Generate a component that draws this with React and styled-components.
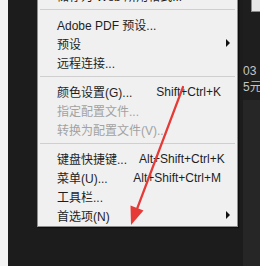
import React from 'react';
import styled, { createGlobalStyle } from 'styled-components';

const GlobalStyle = createGlobalStyle`
  html, body {
    margin: 0;
    padding: 0;
    background: #1c1c1c;
  }
`;

const items = [
  { type: 'item', label: '储存为 Web 所用格式...' },
  { type: 'sep' },
  { type: 'item', label: 'Adobe PDF 预设...' },
  { type: 'item', label: '预设', sub: true },
  { type: 'item', label: '远程连接...' },
  { type: 'sep' },
  { type: 'item', label: '颜色设置(G)...', shortcut: 'Shift+Ctrl+K' },
  { type: 'item', label: '指定配置文件...', disabled: true },
  { type: 'item', label: '转换为配置文件(V)...', disabled: true },
  { type: 'sep' },
  { type: 'item', label: '键盘快捷键...', shortcut: 'Alt+Shift+Ctrl+K' },
  { type: 'item', label: '菜单(U)...', shortcut: 'Alt+Shift+Ctrl+M' },
  { type: 'item', label: '工具栏...' },
  { type: 'item', label: '首选项(N)', sub: true },
];

function App() {
  return (
    <>
      <GlobalStyle />
      <Page>
        <LeftStrip />
        <Canvas>
          <Menu>
            {items.map((it, i) =>
              it.type === 'sep' ? (
                <Separator key={i} />
              ) : (
                <Item key={i} $disabled={it.disabled}>
                  <Label>{it.label}</Label>
                  {it.shortcut && <Shortcut>{it.shortcut}</Shortcut>}
                  {it.sub && <SubArrow />}
                </Item>
              )
            )}
          </Menu>
        </Canvas>
        <RightPanel>
          <PanelTop>
            <TopBox />
            <PanelText>03</PanelText>
            <PanelText>5元</PanelText>
          </PanelTop>
          <PanelBottom />
        </RightPanel>
        <Arrow width="260" height="266" viewBox="0 0 260 266">
          <line x1="183" y1="87" x2="137" y2="209" stroke="#e63a36" strokeWidth="2.2" strokeLinecap="round" />
          <polygon points="131,225 143.5,210.5 130.5,205.5" fill="#e63a36" />
        </Arrow>
      </Page>
    </>
  );
}

const Page = styled.div`
  position: relative;
  display: flex;
  width: 260px;
  height: 266px;
  overflow: hidden;
`;

const LeftStrip = styled.div`
  width: 8px;
  background: #f3f3f3;
`;

const Canvas = styled.div`
  flex: 1;
  background: #1c1c1c;
  padding-left: 29px;
`;

const Menu = styled.div`
  width: 199px;
  margin-top: -17px;
  padding: 2px 0 1px;
  background: #f0f0f0;
  border: 1px solid #8e8e8e;
  box-shadow: 1px 1px 1px rgba(0, 0, 0, 0.5);
  font-family: "Liberation Sans", "Noto Sans CJK SC", sans-serif;
  font-size: 12px;
`;

const Item = styled.div`
  display: flex;
  align-items: center;
  position: relative;
  height: 19px;
  padding: 0 16px 0 19px;
  color: ${p => (p.$disabled ? '#a2a2a2' : '#1e1e1e')};
  white-space: nowrap;
`;

const Label = styled.span`
  flex: 1;
`;

const Shortcut = styled.span`
  margin-left: 12px;
`;

const SubArrow = styled.span`
  position: absolute;
  right: 7px;
  top: 5px;
  width: 0;
  height: 0;
  border-top: 4px solid transparent;
  border-bottom: 4px solid transparent;
  border-left: 4px solid #111;
`;

const Separator = styled.div`
  height: 1px;
  margin: 4px 2px 5px;
  background: #cfcfcf;
`;

const RightPanel = styled.div`
  width: 17px;
  display: flex;
  flex-direction: column;
`;

const PanelTop = styled.div`
  height: 100px;
  background: #1e1e1e;
  overflow: hidden;
  display: flex;
  flex-direction: column;
`;

const TopBox = styled.div`
  align-self: flex-end;
  width: 8px;
  height: 11px;
  background: #e6e6e6;
  border-left: 1px solid #8a8a8a;
  border-bottom: 1px solid #8a8a8a;
  margin-bottom: 51px;
`;

const PanelText = styled.div`
  color: #c4c4c4;
  font-family: "Liberation Sans", "Noto Sans CJK SC", sans-serif;
  font-size: 12px;
  line-height: 16px;
  white-space: nowrap;
`;

const PanelBottom = styled.div`
  flex: 1;
  background: #262626;
`;

const Arrow = styled.svg`
  position: absolute;
  left: 0;
  top: 0;
  pointer-events: none;
`;

export default App;
